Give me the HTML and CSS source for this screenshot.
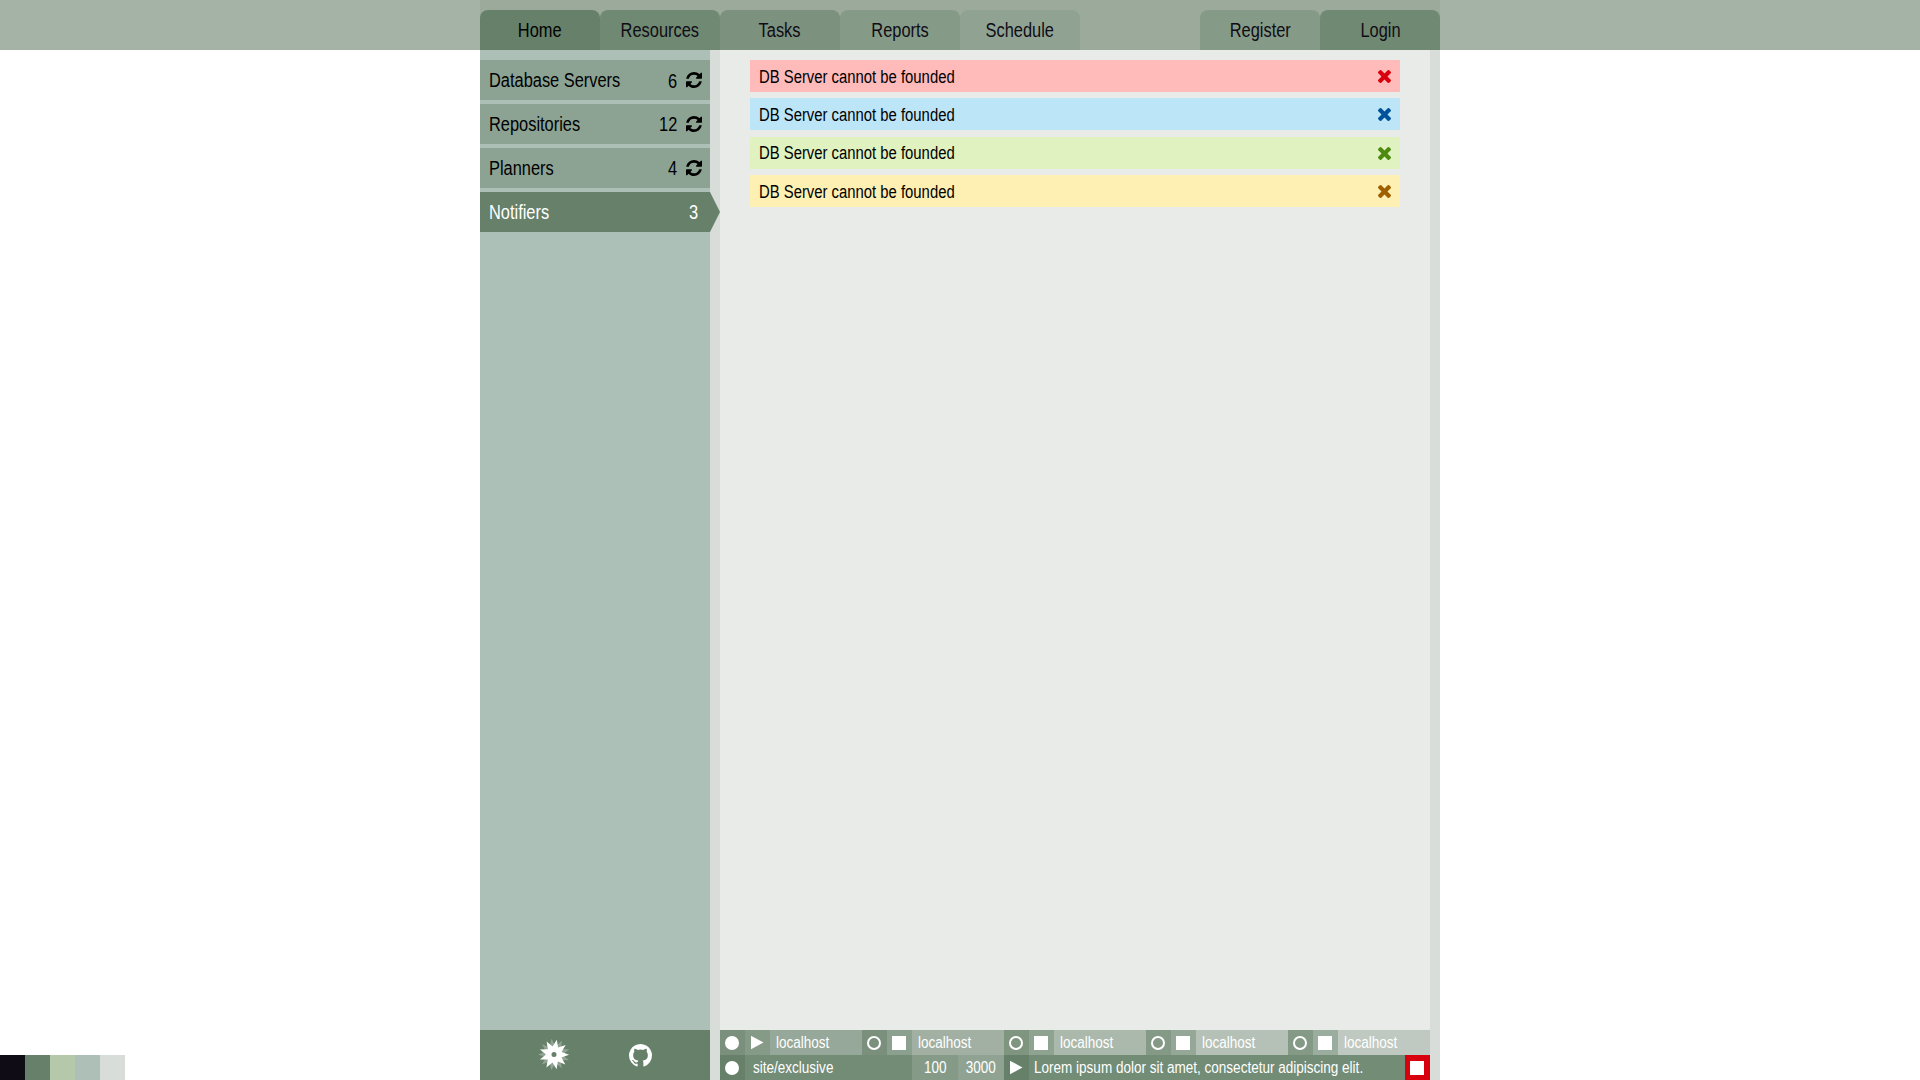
FILE: index.html
```html
<!DOCTYPE html>
<html lang="en">
<head>
<meta charset="utf-8">
<title>Notifiers</title>
<link rel="stylesheet" href="styles.css">
</head>
<body>
<svg class="defs" aria-hidden="true">
  <symbol id="refresh" viewBox="0 128 1536 1536"><path d="M1511 1056q0 5-1 7-64 268-268 434.500t-478 166.500q-146 0-282.500-55t-243.500-157l-129 129q-19 19-45 19t-45-19-19-45v-448q0-26 19-45t45-19h448q26 0 45 19t19 45-19 45l-137 137q71 66 161 102t187 36q134 0 250-65t186-179q11-17 53-117 8-23 30-23h192q13 0 22.500 9.500t9.500 22.500zM1536 256v448q0 26-19 45t-45 19h-448q-26 0-45-19t-19-45 19-45l138-138q-148-137-349-137-134 0-250 65t-186 179q-11 17-53 117-8 23-30 23h-199q-13 0-22.500-9.500t-9.500-22.500v-7q65-268 270-434.500t480-166.500q146 0 284 55.500t245 156.500l130-129q19-19 45-19t45 19 19 45z"/></symbol>
  <symbol id="times" viewBox="302 366 1188 1188"><path d="M1490 1322q0 40-28 68l-136 136q-28 28-68 28t-68-28l-294-294-294 294q-28 28-68 28t-68-28l-136-136q-28-28-28-68t28-68l294-294-294-294q-28-28-28-68t28-68l136-136q28-28 68-28t68 28l294 294 294-294q28-28 68-28t68 28l136 136q28 28 28 68t-28 68l-294 294 294 294q28 28 28 68z"/></symbol>
  <symbol id="github" viewBox="128 128 1536 1536"><path d="M896 128q209 0 385.500 103t279.500 279.500 103 385.500q0 251-146.500 451.500t-378.500 277.500q-27 5-40-7t-13-30q0-3 .5-76.500t.5-134.500q0-97-52-142 57-6 102.500-18t94-39 81-66.500 53-105 20.500-150.500q0-119-79-206 37-91-8-204-28-9-81 11t-92 44l-38 24q-93-26-192-26t-192 26q-16-11-42.500-27t-83.500-38.500-85-13.500q-45 113-8 204-79 87-79 206 0 85 20.500 150t52.500 105 80.500 67 94 39 102.500 18q-39 36-49 103-21 10-45 15t-57 5-65.500-21.500-55.500-62.500q-19-32-48.500-52t-49.500-24l-20-3q-21 0-29 4.500t-5 11.500 9 14 13 12l7 5q22 10 43.500 38t31.500 51l10 23q13 38 44 61.500t67 30 69.500 7 55.500-3.500l23-4q0 38 .5 88.500t.5 54.500q0 18-13 30t-40 7q-232-77-378.500-277.500t-146.500-451.500q0-209 103-385.500t279.500-279.500 385.500-103z"/></symbol>
</svg>
<header class="top">
  <nav class="tabs">
    <a class="tab t1"><span>Home</span></a>
    <a class="tab t2"><span>Resources</span></a>
    <a class="tab t3"><span>Tasks</span></a>
    <a class="tab t4"><span>Reports</span></a>
    <a class="tab t5"><span>Schedule</span></a>
    <a class="tab register"><span>Register</span></a>
    <a class="tab t2"><span>Login</span></a>
  </nav>
</header>
<div class="page">
  <aside class="side">
    <ul class="menu">
      <li><span class="name">Database Servers</span><span class="count low">6</span><svg><use href="#refresh"/></svg></li>
      <li><span class="name">Repositories</span><span class="count">12</span><svg><use href="#refresh"/></svg></li>
      <li><span class="name">Planners</span><span class="count">4</span><svg><use href="#refresh"/></svg></li>
      <li class="active"><span class="name">Notifiers</span><span class="count">3</span></li>
    </ul>
    <footer class="links">
      <svg class="logo" viewBox="-17 -16.5 34 34">
        <path class="shade" transform="rotate(-20) scale(1.060)" d="M2.800 -14.700L4.100 -6.900L11.600 -9.500L7.600 -2.600L15 0.300L7.500 2.900L11.300 9.900L3.900 7L2.500 14.800L-1.500 7.900L-7.600 13L-6.200 5.100L-14.100 5L-8 0L-14.100 -5.100L-6.100 -5.200L-7.400 -13L-1.400 -7.900Z"/>
        <path d="M2.800 -14.700L4.100 -6.900L11.600 -9.500L7.600 -2.600L15 0.300L7.500 2.900L11.300 9.900L3.900 7L2.500 14.800L-1.500 7.900L-7.600 13L-6.200 5.100L-14.100 5L-8 0L-14.100 -5.100L-6.100 -5.200L-7.400 -13L-1.400 -7.900Z"/>
        <circle class="hub" r="2.500"/>
      </svg>
      <svg class="git"><use href="#github"/></svg>
    </footer>
  </aside>
  <main class="main">
    <section class="alerts">
      <div class="alert error"><span>DB Server cannot be founded</span><svg><use href="#times"/></svg></div>
      <div class="alert info"><span>DB Server cannot be founded</span><svg><use href="#times"/></svg></div>
      <div class="alert success"><span>DB Server cannot be founded</span><svg><use href="#times"/></svg></div>
      <div class="alert warning"><span>DB Server cannot be founded</span><svg><use href="#times"/></svg></div>
    </section>
    <footer class="status">
      <div class="hosts">
        <div class="host h1"><i class="cell"><b class="dot"></b></i><i class="cell act"><b class="play"></b></i><span class="label"><span>localhost</span></span></div>
        <div class="host h2"><i class="cell"><b class="ring"></b></i><i class="cell act"><b class="stop"></b></i><span class="label"><span>localhost</span></span></div>
        <div class="host h3"><i class="cell"><b class="ring"></b></i><i class="cell act"><b class="stop"></b></i><span class="label"><span>localhost</span></span></div>
        <div class="host h4"><i class="cell"><b class="ring"></b></i><i class="cell act"><b class="stop"></b></i><span class="label"><span>localhost</span></span></div>
        <div class="host h5"><i class="cell"><b class="ring"></b></i><i class="cell act"><b class="stop"></b></i><span class="label"><span>localhost</span></span></div>
      </div>
      <div class="task">
        <i class="cell"><b class="dot"></b></i>
        <span class="site"><span>site/exclusive</span></span>
        <span class="num n1"><span>100</span></span>
        <span class="num n2"><span>3000</span></span>
        <i class="cell"><b class="play"></b></i>
        <span class="message"><span>Lorem ipsum dolor sit amet, consectetur adipiscing elit.</span></span>
        <i class="cell halt"><b class="stop"></b></i>
      </div>
    </footer>
  </main>
</div>
<div class="palette"><i class="p1"></i><i class="p2"></i><i class="p3"></i><i class="p4"></i><i class="p5"></i></div>
</body>
</html>
```
FILE: styles.css
```css
* { box-sizing: border-box; }
body {
  margin: 0;
  height: 100vh;
  display: flex;
  flex-direction: column;
  overflow: hidden;
  background: #fff;
  color: #000;
  font: 20px "Liberation Sans", Arial, sans-serif;
}
.defs { position: absolute; width: 0; height: 0; }
svg { display: block; fill: currentColor; flex: none; }

.top { height: 50px; flex: none; background: #a4b3a6; }
.tabs {
  width: 960px;
  height: 50px;
  margin: 0 auto;
  padding-top: 10px;
  display: flex;
  background: #9caa9c;
}
.tab {
  width: 120px;
  height: 40px;
  line-height: 40px;
  border-radius: 8px 8px 0 0;
  text-align: center;
  color: #0f0c16;
}
.tab span { display: inline-block; transform: scaleX(.82); margin: 0 -10px; }
.t1 { background: #668069; color: #000; }
.t2 { background: #6f8972; }
.t3 { background: #7c917e; }
.t4 { background: #869b87; }
.t5 { background: #90a392; }
.register { background: #869b87; margin-left: auto; }

.page { width: 960px; flex: 1; margin: 0 auto; display: flex; }
.side {
  width: 230px;
  flex: none;
  display: flex;
  flex-direction: column;
  justify-content: space-between;
  background: #adc0b8;
}
.menu { list-style: none; margin: 0; padding: 10px 0 0; display: grid; gap: 4px; }
.menu li {
  height: 40px;
  line-height: 40px;
  padding: 0 8px 0 8.5px;
  display: flex;
  align-items: center;
  background: #8ca393;
}
.menu svg { width: 16px; height: 16px; margin-left: 9px; }
.name { flex: 1; white-space: nowrap; transform: scaleX(.82); transform-origin: left; }
.count { transform: scaleX(.82); transform-origin: right; }
.low { padding-top: 2px; }
.menu .active { position: relative; background: #668069; color: #fff; padding-right: 12px; }
.active::after {
  content: "";
  position: absolute;
  left: 100%;
  top: 0;
  width: 10px;
  height: 40px;
  background: #668069;
  clip-path: polygon(0 0, 100% 50%, 0 100%);
}
.links {
  height: 50px;
  display: flex;
  align-items: center;
  padding-left: 57px;
  gap: 58px;
  background: #668069;
  color: #fff;
}
.logo { width: 34px; height: 34px; }
.shade { fill: #91a493; }
.hub { fill: #668069; }
.git { width: 23px; height: 23px; margin-top: 1px; }

.main {
  flex: 1;
  min-width: 0;
  display: flex;
  flex-direction: column;
  justify-content: space-between;
  background: #e8ebe8;
  border: solid #d8ddd9;
  border-width: 0 10px;
}
.alerts { padding: 10px 30px 0; display: grid; gap: 6.4px; font-size: 18px; }
.alert {
  height: 32px;
  line-height: 32px;
  padding: 0 9px;
  display: flex;
  align-items: center;
  justify-content: space-between;
}
.alert span { padding-top: 1px; transform: scaleX(.825); transform-origin: left; }
.alert svg { width: 13px; height: 13px; margin-top: 1px; }
.error { background: #ffbaba; }
.error svg { color: #d8000c; }
.info { background: #bde5f8; }
.info svg { color: #00529b; }
.success { background: #dff2bf; }
.success svg { color: #4f8a10; }
.warning { background: #feefb3; }
.warning svg { color: #9f6000; }

.status { font-size: 16px; line-height: 25px; color: #fff; }
.hosts, .host, .task { display: flex; height: 25px; }
.host { flex: 1; }
.cell { width: 25px; height: 25px; padding-right: 1px; flex: none; display: grid; place-items: center; background: #668069; }
.host .cell { background: #7a907c; }
.host .act { background: #8ca08f; }
.label { flex: 1; padding-left: 6px; white-space: nowrap; }
.label span, .site span, .message span { display: inline-block; transform: scaleX(.845); transform-origin: left; }
.host.h1 .act { background: #869b87; }
.host.h3 .cell { background: #80957f; }
.host.h3 .act { background: #8fa391; }
.host.h4 .cell, .host.h5 .cell { background: #859a86; }
.host.h4 .act { background: #95a898; }
.host.h5 .act { background: #9bad9e; }
.h1 .label { background: #96a899; }
.h2 .label { background: #a1b0a3; }
.h3 .label { background: #abb9ad; }
.h4 .label { background: #b5c1b6; }
.h5 .label { background: #bfc9c1; }
.dot, .ring, .stop { width: 14px; height: 14px; background: #fff; }
.dot { border-radius: 50%; }
.ring { border-radius: 50%; border: 2px solid #fff; background: none; }
.play { width: 13px; height: 14px; background: #fff; clip-path: polygon(0 0, 100% 50%, 0 100%); }
.site { width: 167px; flex: none; padding-left: 8px; background: #738c76; }
.num { width: 46px; flex: none; text-align: center; }
.num span { display: inline-block; transform: scaleX(.845); }
.n1 { background: #869b87; }
.n2 { background: #90a392; }
.message { flex: 1; min-width: 0; padding-left: 5px; white-space: nowrap; background: #738c76; }
.task .halt { background: #d8000c; }

.palette { position: absolute; left: 0; bottom: 0; display: flex; }
.palette i { width: 25px; height: 25px; }
.p1 { background: #0f0c16; }
.p2 { background: #668069; }
.p3 { background: #b5c9aa; }
.p4 { background: #adbfb6; }
.p5 { background: #d8ddd9; }
```
